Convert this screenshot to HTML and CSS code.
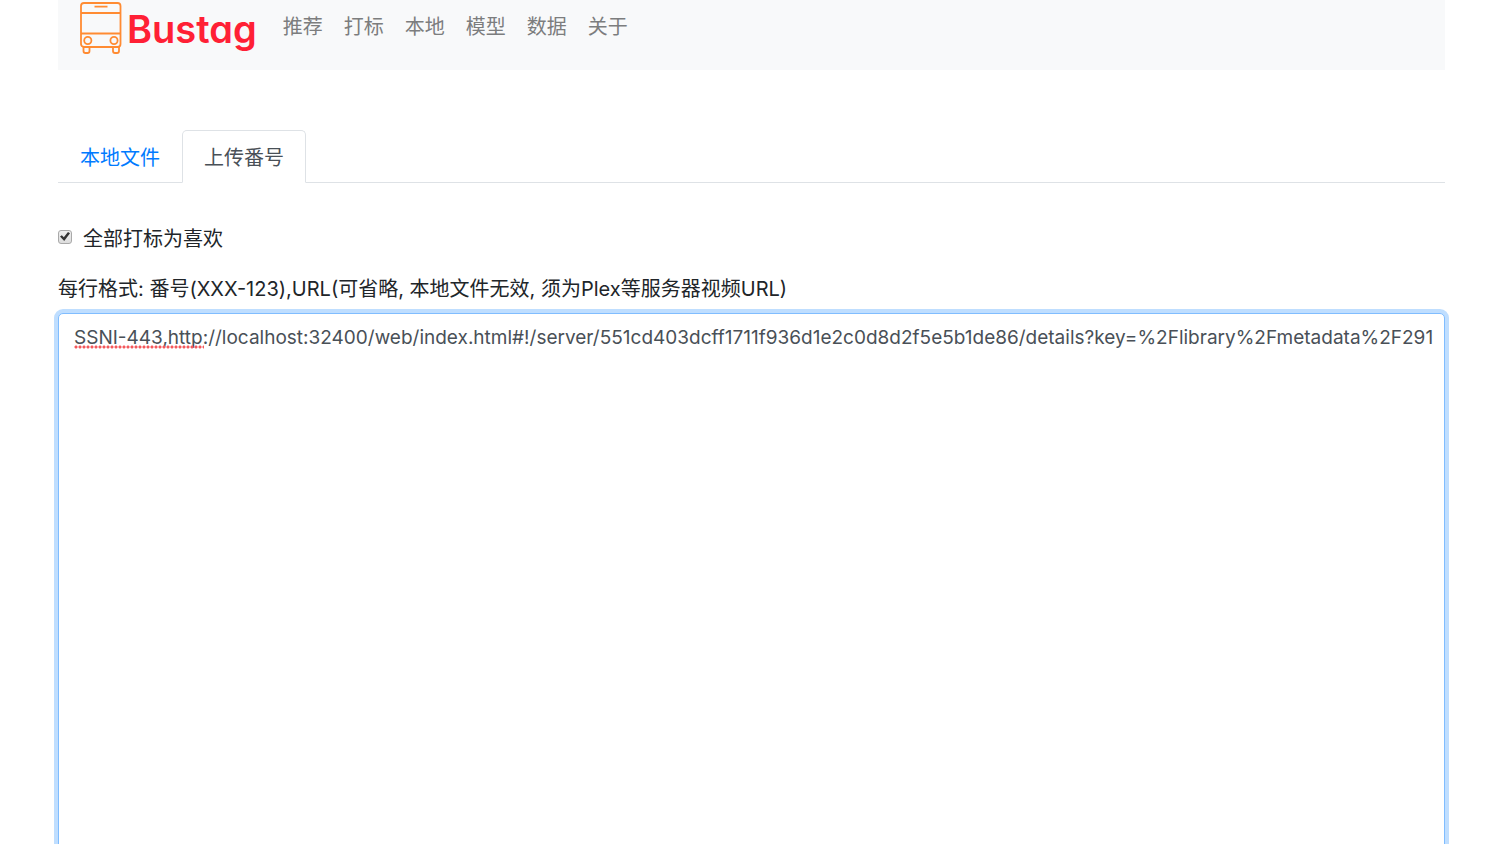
FILE: index.html
```html
<!DOCTYPE html>
<html lang="zh-CN">
<head>
  <meta charset="UTF-8">
  <meta name="viewport" content="width=device-width, initial-scale=1">
  <title>Bustag</title>
  <link rel="stylesheet" href="styles.css">
</head>
<body>
  <div class="container">
    <nav class="navbar">
      <a class="brand" href="/">
        <svg class="bus" viewBox="0 0 42 54" fill="none" stroke="#ff8b32" stroke-width="1.8" aria-hidden="true">
          <rect x="1" y="3" width="39.500" height="44" rx="3"/>
          <path d="M1 13h39.500M1 33.500h39.500M14.500 6.700h13"/>
          <circle cx="7.800" cy="40.500" r="3.600"/>
          <circle cx="34" cy="40.500" r="3.600"/>
          <path d="M3.500 47v4q0 2 2 2h2q2 0 2-2V47M33 47v4q0 2 2 2h2q2 0 2-2V47"/>
        </svg>
        <span class="brand-name">Bustag</span>
      </a>
      <ul class="nav-links">
        <li><a href="/">推荐</a></li>
        <li><a href="/tagit">打标</a></li>
        <li><a href="/local">本地</a></li>
        <li><a href="/model">模型</a></li>
        <li><a href="/load">数据</a></li>
        <li><a href="/about">关于</a></li>
      </ul>
    </nav>

    <ul class="tabs">
      <li><a class="tab" href="/local">本地文件</a></li>
      <li><a class="tab active" href="/local_fanhao">上传番号</a></li>
    </ul>

    <form class="upload" action="/local_fanhao" method="post">
      <div class="check">
        <input type="checkbox" id="tag_like" name="tag_like" checked>
        <label for="tag_like">全部打标为喜欢</label>
      </div>
      <label class="hint" for="fanhao">每行格式: 番号(XXX-123),URL(可省略, 本地文件无效, 须为Plex等服务器视频URL)</label>
      <div class="editor">
        <textarea id="fanhao" name="fanhao" rows="20" spellcheck="false">SSNI-443,http://localhost:32400/web/index.html#!/server/551cd403dcff1711f936d1e2c0d8d2f5e5b1de86/details?key=%2Flibrary%2Fmetadata%2F291</textarea>
        <span class="squiggle"></span>
      </div>
    </form>
  </div>
</body>
</html>
```
FILE: styles.css
```css
* { box-sizing: border-box; }
body {
  margin: 0;
  height: 100vh;
  overflow: hidden;
  background: #fff;
  color: #212529;
  font-family: Inter, "Noto Sans CJK SC", sans-serif;
  font-size: 20px;
  line-height: 30px;
}
a { text-decoration: none; }
ul { list-style: none; margin: 0; padding: 0; }
.container { padding: 0 42px 0 58px; }

.navbar {
  display: flex;
  align-items: flex-start;
  height: 70px;
  padding: 0 22px;
  background: #f8f9fa;
}
.brand { display: flex; gap: 5px; margin-right: 26px; }
.bus { width: 42px; height: 54px; }
.brand-name {
  color: #ff2035;
  font-family: "Comic Sans MS", Inter, sans-serif;
  font-feature-settings: "cv11";
  font-size: 38px;
  font-weight: 600;
  line-height: 58px;
}
.nav-links { display: flex; gap: 21px; padding-top: 12px; }
.nav-links a { color: #7c7d7e; }

.tabs {
  display: flex;
  margin-top: 60px;
  border-bottom: 1px solid #dee2e6;
}
.tab {
  display: block;
  margin-bottom: -1px;
  padding: 12px 21px 9px;
  border: 1px solid transparent;
  border-radius: 5px 5px 0 0;
  color: #007bff;
}
.tab.active {
  background: #fff;
  border-color: #dee2e6 #dee2e6 #fff;
  color: #495057;
}

.upload { padding-top: 41px; }
.check { display: flex; align-items: center; gap: 11px; }
/* small grey box with a dark tick */
.check input {
  appearance: none;
  width: 14px;
  height: 14px;
  margin: 0 0 5px;
  border: 1px solid #a9a9a9;
  border-radius: 3px;
  background: linear-gradient(#eee, #ddd);
  display: grid;
  place-items: center;
}
.check input:checked::before {
  content: "";
  width: 10px;
  height: 9px;
  background: #333;
  clip-path: polygon(0 50%, 18% 36%, 38% 58%, 80% 0, 100% 14%, 42% 100%);
}
.hint { display: block; margin-top: 20px; margin-bottom: 9px; }

.editor { position: relative; }
textarea {
  display: block;
  width: 100%;
  padding: 9px 8px 9px 15px;
  border: 1px solid #80bdff;
  border-radius: 5px;
  outline: none;
  box-shadow: 0 0 0 4px #bfdeff;
  resize: none;
  color: #495057;
  font: inherit;
  font-size: 19px;
}
.squiggle {
  position: absolute;
  left: 16px;
  top: 32px;
  width: 130px;
  height: 4px;
  background: radial-gradient(circle at 2px 2px, #f4595c 1px, transparent 2px) 0 0 / 4px 4px;
  pointer-events: none;
}
```
